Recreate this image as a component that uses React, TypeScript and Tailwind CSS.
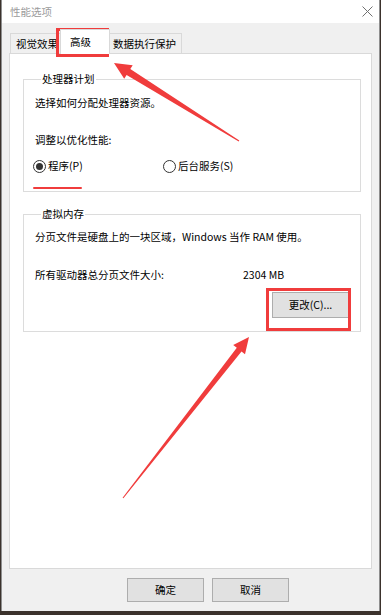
const font = "font-['Noto_Sans_CJK_SC','Microsoft_YaHei',sans-serif]";

// red annotation arrow: narrow tail, widening shaft, triangular head
function arrowPoints(tx: number, ty: number, px: number, py: number, hl: number, hw: number, wb: number, wt: number) {
  const len = Math.hypot(px - tx, py - ty);
  const ux = (px - tx) / len;
  const uy = (py - ty) / len;
  const nx = -uy;
  const ny = ux;
  const bx = px - hl * ux;
  const by = py - hl * uy;
  const pts = [
    [tx + (nx * wt) / 2, ty + (ny * wt) / 2],
    [bx + (nx * wb) / 2, by + (ny * wb) / 2],
    [bx + nx * hw, by + ny * hw],
    [px, py],
    [bx - nx * hw, by - ny * hw],
    [bx - (nx * wb) / 2, by - (ny * wb) / 2],
    [tx - (nx * wt) / 2, ty - (ny * wt) / 2],
  ];
  return pts.map((p) => p.map((v) => v.toFixed(1)).join(",")).join(" ");
}

const Radio: React.FC<{ checked?: boolean; label: string }> = ({ checked, label }) => (
  <div className="flex items-center gap-[2px]">
    <span className="flex h-[13px] w-[13px] items-center justify-center rounded-full border border-[#333] bg-white">
      {checked && <span className="h-[7px] w-[7px] rounded-full bg-[#333]" />}
    </span>
    <span>{label}</span>
  </div>
);

const App: React.FC = () => {
  return (
    <div className={`relative h-[615px] w-[381px] overflow-hidden bg-[#3b322c] text-[10.5px] leading-[14px] text-black ${font}`}>
      {/* window */}
      <div className="ml-[1px] flex h-[611px] w-[379px] flex-col border-x border-[#8f8f8f] bg-[#f0f0f0]">
        {/* title bar */}
        <div className="flex h-[23px] items-center justify-between bg-white pl-[8px] pr-[6px]">
          <span className="text-[#9b9b9b]">性能选项</span>
          <svg width="11" height="11" viewBox="0 0 11 11">
            <path d="M0.5 0.5 L10.5 10.5 M10.5 0.5 L0.5 10.5" stroke="#707070" strokeWidth="1" fill="none" />
          </svg>
        </div>

        <div className="flex flex-1 flex-col px-[7px] pt-[7px]">
          {/* tabs */}
          <div className="flex h-[23px] items-end">
            <div className="ml-[1px] flex h-[20px] w-[50px] items-center border-l border-t border-[#d9d9d9] pl-[5px]">
              视觉效果
            </div>
            <div className="relative z-10 -mb-[1px] flex h-[25px] w-[50px] items-center border-x border-t border-[#d9d9d9] bg-white pl-[9px]">
              高级
            </div>
            <div className="flex h-[20px] w-[72px] items-center border-r border-t border-[#d9d9d9] pl-[3px]">
              数据执行保护
            </div>
          </div>

          {/* tab panel */}
          <div className="flex flex-1 flex-col border border-[#d9d9d9] bg-white pl-[13px] pr-[10px]">
            <fieldset className="mt-[18px] border border-[#dcdcdc] pb-[18px] pl-[11px]">
              <legend className="ml-[6px] px-[1px]">处理器计划</legend>
              <div className="mt-[10px] h-[14px]">选择如何分配处理器资源。</div>
              <div className="mt-[23px] h-[14px]">调整以优化性能:</div>
              <div className="-ml-[2px] mt-[12px] flex h-[14px] items-center">
                <div className="w-[130px]">
                  <Radio checked label="程序(P)" />
                </div>
                <Radio label="后台服务(S)" />
              </div>
            </fieldset>

            <fieldset className="mt-[15px] border border-[#dcdcdc] pb-[13px] pl-[11px] pr-[11px]">
              <legend className="ml-[6px] px-[1px]">虚拟内存</legend>
              <div className="mt-[9px] h-[14px]">分页文件是硬盘上的一块区域，Windows 当作 RAM 使用。</div>
              <div className="mt-[24px] flex h-[14px]">
                <span className="w-[208px]">所有驱动器总分页文件大小:</span>
                <span>2304 MB</span>
              </div>
              <div className="mt-[10px] flex justify-end">
                <button className="h-[26px] w-[77px] border border-[#adadad] bg-[#e1e1e1]">更改(C)...</button>
              </div>
            </fieldset>
          </div>

          {/* dialog buttons */}
          <div className="flex justify-end gap-[8px] pb-[9px] pr-[83px] pt-[9px]">
            <button className="h-[24px] w-[77px] border border-[#adadad] bg-[#e1e1e1]">确定</button>
            <button className="h-[24px] w-[77px] border border-[#adadad] bg-[#e1e1e1]">取消</button>
          </div>
        </div>
      </div>

      {/* red annotations */}
      <div className="pointer-events-none absolute left-[56px] top-[28px] h-[29px] w-[53px] border-[3px] border-[#f03c3c]" />
      <div className="pointer-events-none absolute left-[266px] top-[288px] h-[43px] w-[85px] border-[3px] border-[#f03c3c]" />
      <div className="pointer-events-none absolute left-[33px] top-[187px] h-[2px] w-[49px] rounded-full bg-[#f03c3c]" />
      <svg className="pointer-events-none absolute left-0 top-0" width="381" height="615">
        <polygon points={arrowPoints(239, 141, 114, 63, 17, 8, 7, 1)} fill="#f03c3c" />
        <polygon points={arrowPoints(123, 498, 249, 337, 16, 7.5, 6, 1)} fill="#f03c3c" />
      </svg>
    </div>
  );
};

export default App;
